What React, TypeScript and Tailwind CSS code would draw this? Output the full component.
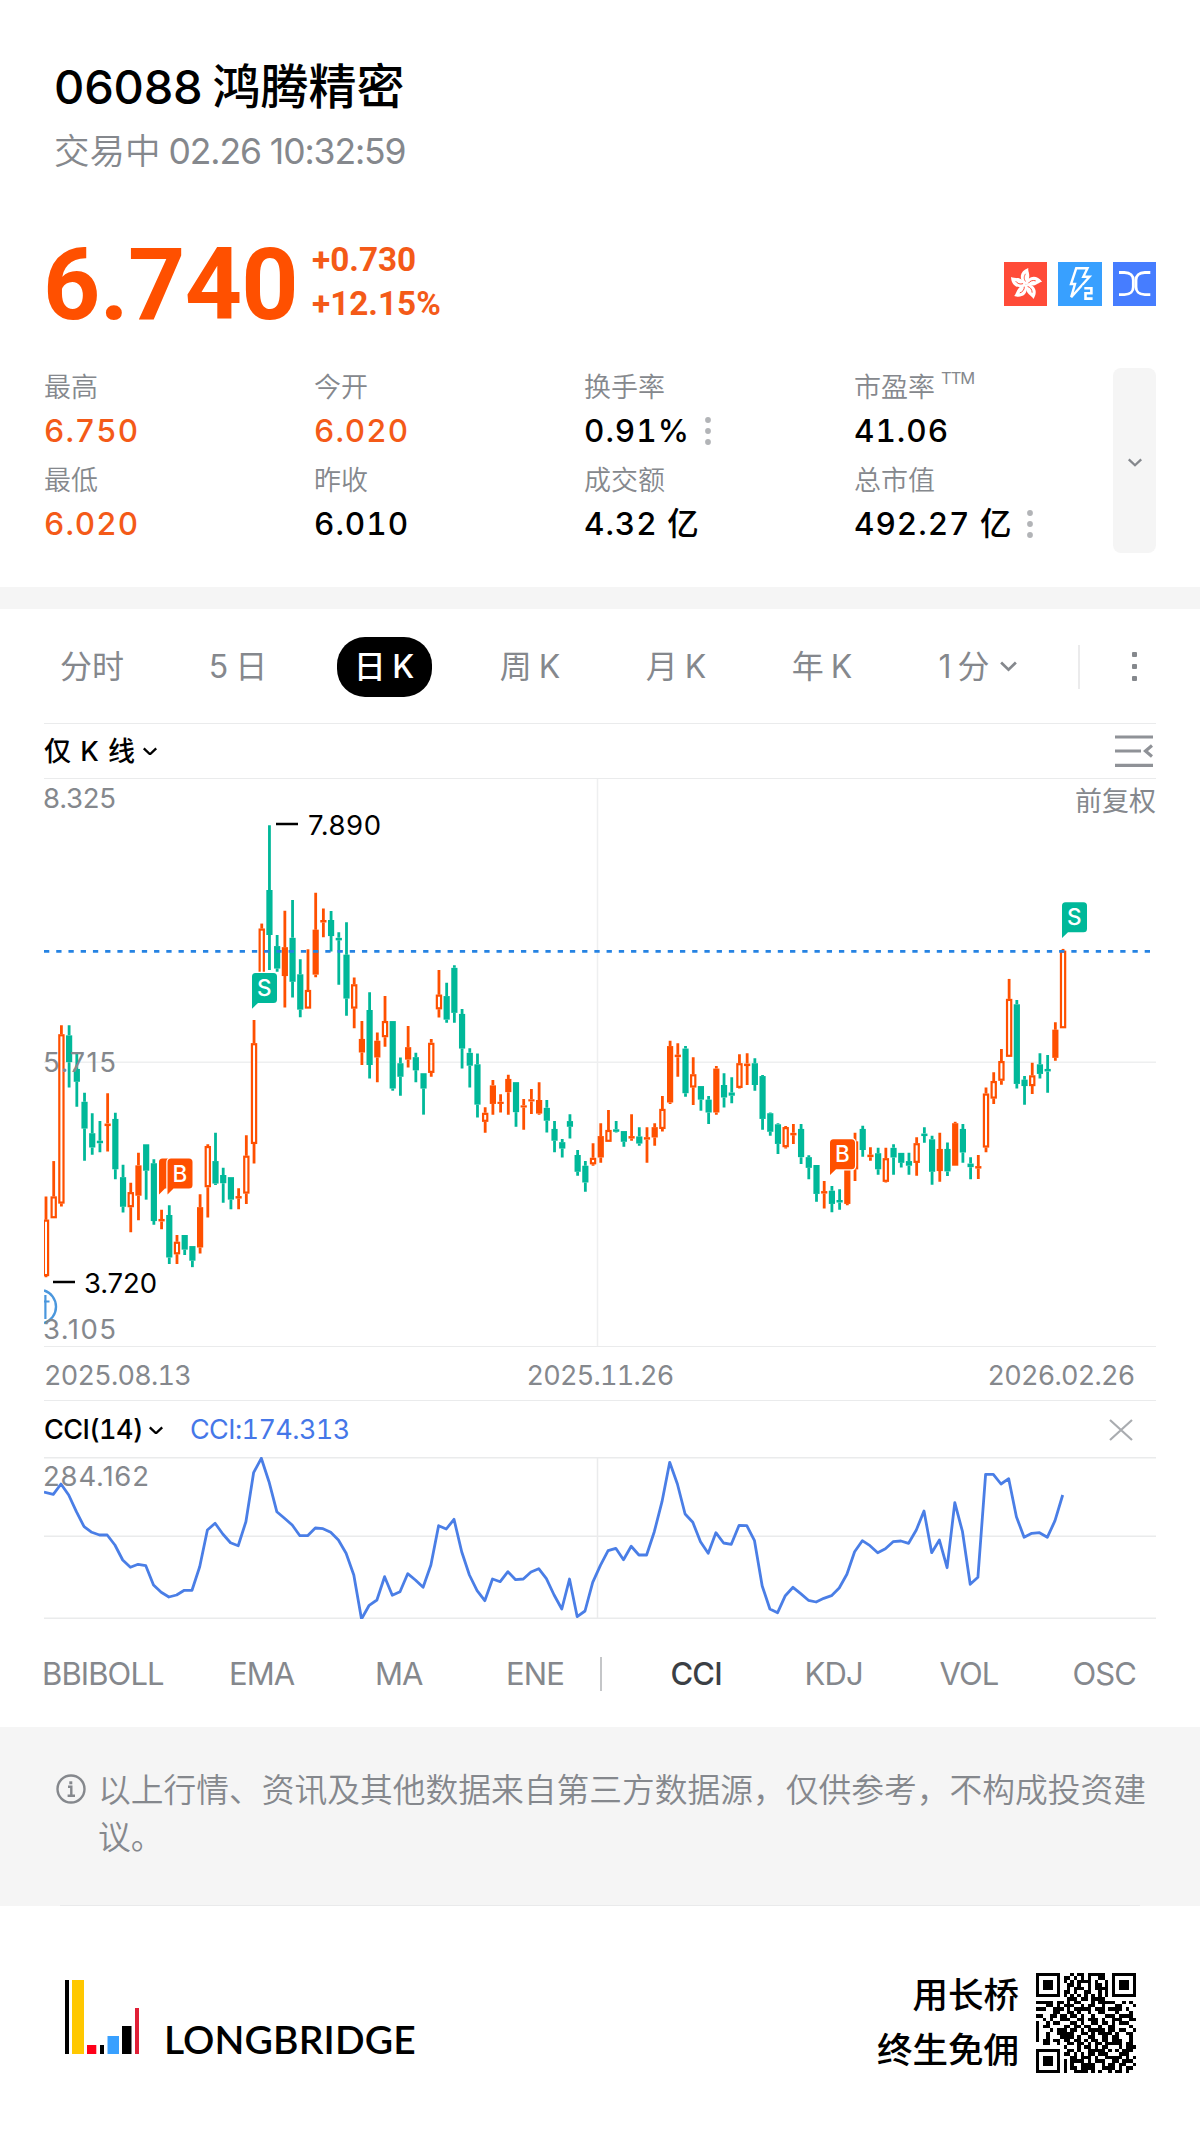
import React from "react";

const SANS = "font-[Inter,'Noto_Sans_CJK_SC',sans-serif]";

type Kind = "h" | "r" | "g";
type Candle = [Kind, number, number, number, number];

// kind (hollow up / solid up / down), high, body top, body bottom, low, in chart units
const CANDLES: Candle[] = [
  ["h", 1166, 1231, 1389, 1392], ["h", 1067, 1166, 1227, 1227], ["h", 687, 712, 1186, 1194],
  ["g", 687, 715, 790, 861], ["g", 765, 809, 845, 915], ["g", 876, 901, 976, 1066],
  ["g", 933, 989, 1029, 1049], ["g", 955, 1010, 1017, 1042], ["r", 877, 962, 969, 1040],
  ["g", 932, 949, 1090, 1118], ["g", 1077, 1112, 1195, 1211], ["h", 1128, 1154, 1196, 1266],
  ["r", 1044, 1079, 1164, 1233], ["g", 1020, 1020, 1094, 1175], ["g", 1062, 1073, 1235, 1245],
  ["r", 1203, 1229, 1236, 1258], ["g", 1191, 1218, 1337, 1355], ["h", 1274, 1293, 1328, 1355],
  ["g", 1274, 1274, 1315, 1330], ["g", 1305, 1305, 1346, 1364], ["r", 1160, 1196, 1309, 1326],
  ["h", 1020, 1025, 1140, 1225], ["g", 988, 1067, 1130, 1134], ["g", 1086, 1106, 1129, 1184],
  ["g", 1112, 1112, 1175, 1202], ["r", 1143, 1165, 1172, 1202], ["h", 995, 1052, 1158, 1187],
  ["h", 672, 737, 1019, 1074], ["h", 402, 416, 560, 560], ["g", 127, 308, 434, 532],
  ["g", 434, 465, 528, 537], ["r", 366, 468, 549, 637], ["g", 336, 442, 565, 609],
  ["g", 502, 544, 643, 664], ["h", 474, 588, 640, 640], ["r", 316, 419, 545, 552],
  ["r", 360, 392, 399, 440], ["g", 367, 392, 437, 480], ["g", 426, 442, 449, 573],
  ["g", 398, 489, 612, 660], ["h", 553, 572, 640, 695], ["r", 675, 725, 763, 798],
  ["g", 594, 644, 798, 836], ["r", 707, 730, 777, 846], ["h", 605, 675, 720, 747],
  ["g", 675, 675, 864, 870], ["g", 777, 793, 831, 884], ["r", 689, 748, 783, 805],
  ["g", 764, 776, 813, 846], ["g", 821, 821, 864, 937], ["h", 725, 736, 820, 831],
  ["h", 532, 601, 642, 665], ["g", 568, 605, 671, 680], ["g", 519, 526, 652, 680],
  ["g", 641, 655, 752, 808], ["g", 751, 764, 800, 861], ["g", 766, 796, 909, 945],
  ["h", 916, 932, 957, 988], ["r", 840, 855, 907, 937], ["r", 880, 901, 907, 931],
  ["r", 825, 837, 874, 937], ["g", 846, 846, 930, 971], ["r", 893, 911, 917, 979],
  ["r", 865, 894, 900, 935], ["r", 846, 896, 934, 937], ["g", 896, 918, 954, 987],
  ["g", 955, 977, 1010, 1042], ["g", 1005, 1014, 1032, 1057], ["g", 936, 955, 971, 1004],
  ["g", 1036, 1050, 1097, 1108], ["g", 1067, 1080, 1127, 1153], ["h", 1017, 1058, 1076, 1080],
  ["r", 961, 997, 1057, 1072], ["h", 924, 980, 1013, 1013], ["g", 955, 978, 985, 987],
  ["g", 983, 983, 1013, 1027], ["r", 936, 997, 1004, 1010], ["g", 972, 998, 1018, 1024],
  ["r", 972, 1000, 1007, 1072], ["r", 961, 972, 1001, 1024], ["h", 885, 921, 977, 984],
  ["r", 730, 745, 903, 907], ["r", 737, 769, 776, 831], ["g", 745, 752, 877, 887],
  ["h", 776, 824, 861, 910], ["g", 857, 857, 895, 926], ["g", 885, 895, 931, 963],
  ["r", 801, 808, 931, 937], ["g", 821, 854, 889, 917], ["g", 832, 875, 884, 905],
  ["h", 768, 793, 862, 864], ["r", 765, 794, 801, 854], ["g", 779, 793, 854, 870],
  ["g", 826, 829, 949, 979], ["g", 931, 933, 985, 996], ["g", 961, 964, 1019, 1047],
  ["h", 969, 972, 1028, 1032], ["r", 963, 988, 995, 1019], ["g", 963, 977, 1056, 1075],
  ["g", 1051, 1056, 1086, 1118], ["g", 1078, 1078, 1159, 1181], ["r", 1123, 1151, 1158, 1200],
  ["g", 1137, 1150, 1187, 1210], ["g", 1146, 1176, 1183, 1203], ["r", 1040, 1050, 1187, 1191],
  ["h", 988, 1012, 1090, 1123], ["g", 968, 977, 1036, 1055], ["r", 1028, 1049, 1056, 1066],
  ["g", 1030, 1045, 1090, 1105], ["h", 1030, 1059, 1125, 1127], ["g", 1020, 1030, 1057, 1105],
  ["g", 1044, 1044, 1072, 1085], ["g", 1044, 1067, 1080, 1105], ["h", 1000, 1017, 1072, 1108],
  ["g", 972, 990, 997, 1016], ["g", 996, 1006, 1097, 1133], ["r", 988, 1033, 1095, 1125],
  ["g", 1015, 1033, 1096, 1109], ["r", 957, 961, 1080, 1080], ["g", 963, 977, 1043, 1072],
  ["g", 1056, 1074, 1084, 1118], ["r", 1050, 1081, 1088, 1117], ["h", 861, 878, 1029, 1042],
  ["h", 818, 843, 892, 907], ["h", 753, 787, 842, 853], ["h", 557, 613, 775, 775],
  ["g", 616, 628, 851, 864], ["g", 829, 839, 857, 909], ["h", 792, 827, 857, 879],
  ["g", 765, 796, 823, 836], ["g", 770, 809, 816, 876], ["r", 678, 699, 778, 786],
  ["h", 473, 478, 695, 695],
];

const CCI = [
  486, 493, 462, 495, 545, 590, 607, 615, 615, 645, 690, 712, 703, 707, 765, 787, 801, 795, 781, 781,
  710, 600, 580, 612, 638, 647, 575, 428, 385, 455, 545, 565, 585, 617, 617, 594, 596, 607, 630, 670,
  735, 867, 826, 810, 740, 796, 785, 731, 750, 772, 705, 587, 597, 568, 665, 735, 782, 812, 747, 755,
  725, 749, 747, 726, 716, 746, 795, 837, 747, 860, 843, 757, 706, 662, 655, 689, 649, 675, 675, 605,
  515, 397, 462, 552, 577, 635, 670, 608, 639, 643, 586, 587, 632, 768, 837, 848, 797, 772, 791, 811,
  816, 805, 797, 774, 733, 665, 632, 647, 668, 656, 635, 633, 640, 600, 543, 668, 630, 713, 518, 605,
  763, 742, 433, 433, 462, 446, 560, 622, 610, 608, 622, 572, 495,
];

const QR = [
  "#######...#.##.#####..#######",
  "#.....#.##.#.#.#..##..#.....#",
  "#.###.#.#.#.####.#..#.#.###.#",
  "#.###.#..##.#..#.##.#.#.###.#",
  "#.###.#..#.###.#.####.#.###.#",
  "#.....#.##.#..##..#.#.#.....#",
  "#######.#.#.#.#.#.#.#.#######",
  ".........###.##.####.........",
  "#####.##.#.##...#.#####..#.#.",
  "...##.#.###..#.##..#...##...#",
  "###..###.#.#####.###.####.#..",
  ".....##..##.#..#..##...#...#.",
  "##..##.##.##.#..#...###.####.",
  "..#.#..###..##.###.#..###..##",
  "#..#.##...##.#..##.##.#.###..",
  "#.##....##.##.##..#..##....#.",
  "#...#.###.##.#.#####.##.##..#",
  "#..#..#####..##.#.####.#..##.",
  "#..#...####.#..##..##.##...#.",
  "#.##.##.##.##.#.##.##.###..#.",
  "..##..#..##.##.#.##.#####.##.",
  "........#...#.##.#.##...#.###",
  "#######..##.#..#####.#.#.###.",
  "#.....#.##.#.#.##.###...###..",
  "#.###.#...##.###.#..#####.#.#",
  "#.###.#.#.####.#.###..##.###.",
  "#.###.#.#.#..####..#.##.##..#",
  "#.....#.#.##.####..####.#.##.",
  "#######.#..####.#.#..#.##.#..",
];

const PITCH = 7.705;
const UP = "#ff5000";
const DOWN = "#00b899";

function Chevron({ className }: { className?: string }) {
  return (
    <svg viewBox="0 0 18 10" className={className} fill="none" stroke="currentColor" strokeWidth="2.6">
      <path d="M2 1.5 9 8.2 16 1.5" />
    </svg>
  );
}

function Dots({ className }: { className?: string }) {
  return (
    <svg viewBox="0 0 6 28" className={className} fill="#b2b4b7">
      <circle cx="3" cy="3" r="2.9" />
      <circle cx="3" cy="14" r="2.9" />
      <circle cx="3" cy="25" r="2.9" />
    </svg>
  );
}

function Marker({ x, y, letter, color }: { x: number; y: number; letter: string; color: string }) {
  return (
    <g transform={`translate(${x} ${y})`}>
      <path
        d="M3.5 0H21.5Q25 0 25 3.5V26.5Q25 30 21.5 30H6L0 35.8V3.5Q0 0 3.5 0Z"
        fill={color}
        stroke="#fff"
        strokeWidth="2.4"
        paintOrder="stroke"
      />
      <text x="12.3" y="23" textAnchor="middle" fontSize="22.5" fontWeight="500" fill="#fff">
        {letter}
      </text>
    </g>
  );
}

function PriceChart() {
  return (
    <svg width="1112" height="567" viewBox="44 779 1112 567" className={`block ${SANS}`}>
      <path d="M44 1062.2H1156M597.5 779V1346" stroke="#eeeff0" strokeWidth="1.5" />
      {CANDLES.map(([kind, high, top, bottom, low], i) => {
        const x = 46 + i * PITCH;
        const [h, t, b, l] = [high, top, bottom, low].map((v) => 780 + v / 2.8);
        const color = kind === "g" ? DOWN : UP;
        return (
          <g key={i}>
            <path d={`M${x} ${h}V${t}M${x} ${b}V${l}`} stroke={color} strokeWidth="2.8" />
            {kind === "h" ? (
              <rect x={x - 2.1} y={t + 1} width="4.2" height={Math.max(b - t - 2, 1)} fill="#fff" stroke={color} strokeWidth="2.2" />
            ) : (
              <rect x={x - 3.1} y={t} width="6.2" height={b - t} fill={color} />
            )}
          </g>
        );
      })}
      <path d="M44 951.3H1156" stroke="#2583e3" strokeWidth="2.8" strokeDasharray="5.3 6.93" />
      <g fill="none" stroke="#4a97dd">
        <path d="M44 1290.5A17 17 0 0 1 44 1323" strokeWidth="2.4" />
        <path d="M45.4 1295V1319M44 1301.5H49.5" strokeWidth="2.2" />
      </g>
      <Marker x={159} y={1158.6} letter="" color={UP} />
      <Marker x={167.5} y={1158.6} letter="B" color={UP} />
      <Marker x={252} y={973} letter="S" color={DOWN} />
      <Marker x={830} y={1139.3} letter="B" color={UP} />
      <Marker x={1062} y={902.2} letter="S" color={DOWN} />
      <g fontSize="27.5" fill="#85888d">
        <text x="43" y="807.5" textLength="73">8.325</text>
        <text x="43" y="1072" textLength="73">5.715</text>
        <text x="43" y="1339" textLength="73">3.105</text>
        <text x="1156" y="810.5" fontSize="27" textAnchor="end">前复权</text>
      </g>
      <path d="M276 824H298M53 1282H75" stroke="#000" strokeWidth="2.4" />
      <g fontSize="27.5" fill="#000">
        <text x="308" y="834.5" textLength="73">7.890</text>
        <text x="84" y="1292.5" textLength="73">3.720</text>
      </g>
    </svg>
  );
}

function CciChart() {
  const points = CCI.map((v, i) => `${(i === 0 ? 44 : 45.6 + i * PITCH).toFixed(1)},${(1330 + v / 3).toFixed(1)}`).join(" ");
  return (
    <svg width="1112" height="162" viewBox="44 1457 1112 162" className={`block ${SANS}`}>
      <path d="M44 1457.8H1156M44 1536.3H1156M44 1618.3H1156M597.5 1458V1618" stroke="#eaebec" strokeWidth="1.5" />
      <polyline points={points} fill="none" stroke="#4a7ee6" strokeWidth="2.8" strokeLinejoin="round" />
      <text x="43" y="1485.8" fontSize="27.5" fill="#85888d" textLength="106">284.162</text>
    </svg>
  );
}

function MarketBadges() {
  return (
    <div className="flex gap-[11px]">
      <svg viewBox="0 0 43.5 43.5" className="size-[43.5px] bg-[#ff4b38]">
        {[0, 72, 144, 216, 288].map((a) => (
          <g key={a} transform={`rotate(${a} 21.8 22.3)`}>
            <path d="M21.8 22.3C14.5 18.5 15 9 24.3 6C23.4 10 28.5 14.5 21.8 22.3Z" fill="#fff" />
            <path d="M21.6 19.5C19.6 17 20 14 21.6 11.8" fill="none" stroke="#ff4b38" strokeWidth="0.9" />
          </g>
        ))}
      </svg>
      <svg viewBox="0 0 43.5 43.5" className="size-[43.5px] bg-[#38a0ff]" fill="none" stroke="#fff">
        <path d="M18.2 6.3H29.5L25.3 14.8H31.5L13.2 35.2L17 22H13Z" strokeWidth="2.4" />
        <path d="M24.5 23.5H37V40H24.5Z" fill="#38a0ff" stroke="none" />
        <path d="M26.3 26.3H33.4V31.3H27.5V36.6H34.6" strokeWidth="2.6" />
      </svg>
      <svg viewBox="0 0 43.5 43.5" className="size-[43.5px] bg-[#467dff]" fill="none" stroke="#fff" strokeWidth="2.8">
        <path d="M6 10.5H11.5C17.5 10.5 20.3 14 20.3 18V25C20.3 29 17.5 32.6 11.5 32.6H6" />
        <path d="M37.3 10.5H31.8C25.8 10.5 23 14 23 18V25C23 29 25.8 32.6 31.8 32.6H37.3" />
      </svg>
    </div>
  );
}

function Stat({ label, sup, value, up, dots }: { label: string; sup?: string; value: string; up?: boolean; dots?: boolean }) {
  return (
    <div className="flex h-[93px] w-[270px] flex-col">
      <div className="flex h-[40px] items-center text-[27px] leading-[40px] font-[350] text-[#85888d]">
        {label}
        {sup && <span className="mb-[20px] ml-[6px] text-[16.5px] leading-[20px] font-normal tracking-[-1px]">{sup}</span>}
      </div>
      <div className={`flex h-[46px] items-center text-[31.5px] leading-[46px] font-[450] tracking-[1px] tabular-nums ${up ? "text-[#f45a18]" : "text-black"}`}>
        {value}
        {dots && <Dots className="ml-[15px] h-[28px] w-[6px]" />}
      </div>
    </div>
  );
}

export default function App() {
  return (
    <div className={`flex h-[2140px] w-[1200px] flex-col overflow-hidden bg-white ${SANS}`}>
      <header className="flex h-[200px] flex-col pl-[54px] pt-[58px]">
        <h1 className="flex h-[58px] items-center text-[47px] leading-[58px] font-[450] text-black">
          <span className="tracking-[-0.2px]">06088</span>
          <span className="ml-[10px] text-[48px]">鸿腾精密</span>
        </h1>
        <p className="mt-[11px] flex h-[50px] items-center text-[35.5px] leading-[50px] text-[#85888d]">
          <span className="font-[350]">交易中</span>
          <span className="ml-[8px] tracking-[-1.1px]">02.26 10:32:59</span>
        </p>
      </header>

      <section className="flex h-[160px] items-start pr-[44px] pl-[43px] pt-[35px]">
        <div className="font-[Roboto,sans-serif] text-[100px] leading-[100px] font-bold tracking-[-0.7px] text-[#ff5000]">6.740</div>
        <div className="ml-[14px] flex flex-col pt-[3px] font-[Roboto,sans-serif] text-[33.3px] leading-[43.5px] font-bold text-[#f45a18]">
          <span>+0.730</span>
          <span>+12.15%</span>
        </div>
        <div className="ml-auto pt-[27px]">
          <MarketBadges />
        </div>
      </section>

      <section className="flex h-[227px] px-[44px] pt-[8px]">
        <div className="grid w-[1069px] grid-cols-[270px_270px_270px_259px] grid-rows-[93px_93px]">
          <Stat label="最高" value="6.750" up />
          <Stat label="今开" value="6.020" up />
          <Stat label="换手率" value="0.91%" dots />
          <Stat label="市盈率" sup="TTM" value="41.06" />
          <Stat label="最低" value="6.020" up />
          <Stat label="昨收" value="6.010" />
          <Stat label="成交额" value="4.32 亿" />
          <Stat label="总市值" value="492.27 亿" dots />
        </div>
        <div className="flex h-[185px] w-[43px] items-center justify-center rounded-[8px] bg-[#f5f5f5] pt-[4px] text-[#85888d]">
          <Chevron className="w-[16px]" />
        </div>
      </section>

      <div className="h-[22px] shrink-0 bg-[#f5f5f5]" />

      <nav className="flex h-[114px] shrink-0 items-center pl-[19px] pt-[1px] text-[32px] leading-[40px] text-[#85888d]">
        {["分时", "5 日", "日 K", "周 K", "月 K", "年 K"].map((t) => (
          <div key={t} className="flex w-[146px] justify-center [word-spacing:-2px]">
            {t === "日 K" ? (
              <span className="flex h-[60px] w-[95px] items-center justify-center rounded-[28px] bg-black font-[450] text-white">{t}</span>
            ) : (
              <span>{t}</span>
            )}
          </div>
        ))}
        <div className="flex w-[166px] items-center justify-center gap-[9px] [word-spacing:-3px]">
          <span>1 分</span>
          <Chevron className="w-[19px]" />
        </div>
        <div className="ml-[17px] h-[44px] w-[1.5px] bg-[#ebebec]" />
        <div className="ml-[52px] flex flex-col gap-[6.5px]">
          <i className="size-[5.5px] rounded-[1px] bg-[#85888d]" />
          <i className="size-[5.5px] rounded-[1px] bg-[#85888d]" />
          <i className="size-[5.5px] rounded-[1px] bg-[#85888d]" />
        </div>
      </nav>

      <div className="mx-[44px] flex h-[56px] shrink-0 items-center border-y-[1.5px] border-[#eaebec]">
        <span className="pt-[1px] text-[27px] leading-[40px] font-[450] text-black [word-spacing:2px]">仅 K 线</span>
        <Chevron className="ml-[7px] w-[16px] text-black" />
        <svg viewBox="0 0 38 32" className="mr-[3px] ml-auto w-[38px]" fill="none" stroke="#8f9297" strokeWidth="3.2">
          <path d="M0 2H38M0 16H26M0 30.3H38M37 10.5 30.5 16 37 21.5" />
        </svg>
      </div>

      <div className="shrink-0 px-[44px]">
        <PriceChart />
      </div>

      <div className="mx-[44px] flex h-[55px] shrink-0 items-center border-y-[1.5px] border-[#eaebec] pt-[5px] text-[27px] tracking-[-0.75px] text-[#85888d] tabular-nums">
        <span className="w-[482.5px]">2025.08.13</span>
        <span className="w-[461px]">2025.11.26</span>
        <span>2026.02.26</span>
      </div>

      <div className="mx-[44px] flex h-[56px] shrink-0 items-center pt-[2px] text-[27px] leading-[40px] tracking-[-0.6px] tabular-nums">
        <span className="w-[98px] font-[450] whitespace-nowrap text-black">CCI(14)</span>
        <Chevron className="ml-[6px] w-[16px] text-black" />
        <span className="ml-[26px] text-[#4577e8]">CCI:174.313</span>
        <svg viewBox="0 0 24 22" className="mr-[23px] ml-auto w-[24px]" fill="none" stroke="#a9acb0" strokeWidth="2.2">
          <path d="M1 1 23 21M23 1 1 21" />
        </svg>
      </div>

      <div className="shrink-0 px-[44px]">
        <CciChart />
      </div>

      <nav className="flex h-[108px] shrink-0 items-center pt-[2px] pl-[42px] text-[31px] leading-[40px] tracking-[-0.9px] text-[#85888d]">
        <span className="w-[187px]">BBIBOLL</span>
        <span className="w-[146px]">EMA</span>
        <span className="w-[131px]">MA</span>
        <span className="w-[94px]">ENE</span>
        <div className="h-[34px] w-[1.5px] bg-[#c4c6c8]" />
        <span className="ml-[69px] w-[134px] font-medium text-[#3b3f45]">CCI</span>
        <span className="w-[135px]">KDJ</span>
        <span className="w-[133px]">VOL</span>
        <span>OSC</span>
      </nav>

      <section className="flex h-[179px] shrink-0 flex-col justify-between bg-[#f5f5f5]">
        <div className="flex pl-[56px] pt-[40px]">
          <svg viewBox="0 0 30 30" className="mt-[7px] size-[30px] shrink-0" fill="none" stroke="#85888d" strokeWidth="2.4">
            <circle cx="15" cy="15" r="13.5" />
            <path d="M12 12.8H15.3V21.5M11.6 21.8H19" />
            <path d="M13.3 8.8H16.3" strokeWidth="3" />
          </svg>
          <p className="ml-[12px] text-[32.75px] leading-[47px] font-[350] whitespace-nowrap text-[#85888d]">
            以上行情、资讯及其他数据来自第三方数据源，仅供参考，不构成投资建
            <br />
            议。
          </p>
        </div>
        <div className="mx-[60px] h-[1.5px] bg-[#e9eaeb]" />
      </section>

      <footer className="flex flex-1 items-start pl-[65px] pr-[64px] pt-[67px]">
        <svg viewBox="0 0 74 74" className="mt-[7px] size-[74px]">
          <path d="M0 0h4v74H0zM35 65h4v9h-4zM57 46h9.5v28H57z" fill="#000" />
          <path d="M7 0h12v74H7z" fill="#ffc800" />
          <path d="M22 65h9.3v9H22z" fill="#ff0019" />
          <path d="M42.5 56H54v18H42.5z" fill="#38a0ff" />
          <path d="M70 28h4v46h-4z" fill="#e01f36" />
        </svg>
        <span className="mt-[42px] ml-[25px] font-[Lato,sans-serif] text-[39px] leading-[48px] font-semibold tracking-[0.1px] text-black">LONGBRIDGE</span>
        <div className="-mt-[5px] ml-auto text-right text-[35.5px] leading-[55px] font-medium text-black">
          <div>用长桥</div>
          <div>终生免佣</div>
        </div>
        <svg viewBox="0 0 29 29" className="ml-[17px] size-[100px]" shapeRendering="crispEdges">
          {QR.flatMap((row, y) => row.split("").map((c, x) => (c === "#" ? <rect key={`${x}-${y}`} x={x} y={y} width="1" height="1" /> : null)))}
        </svg>
      </footer>
    </div>
  );
}
